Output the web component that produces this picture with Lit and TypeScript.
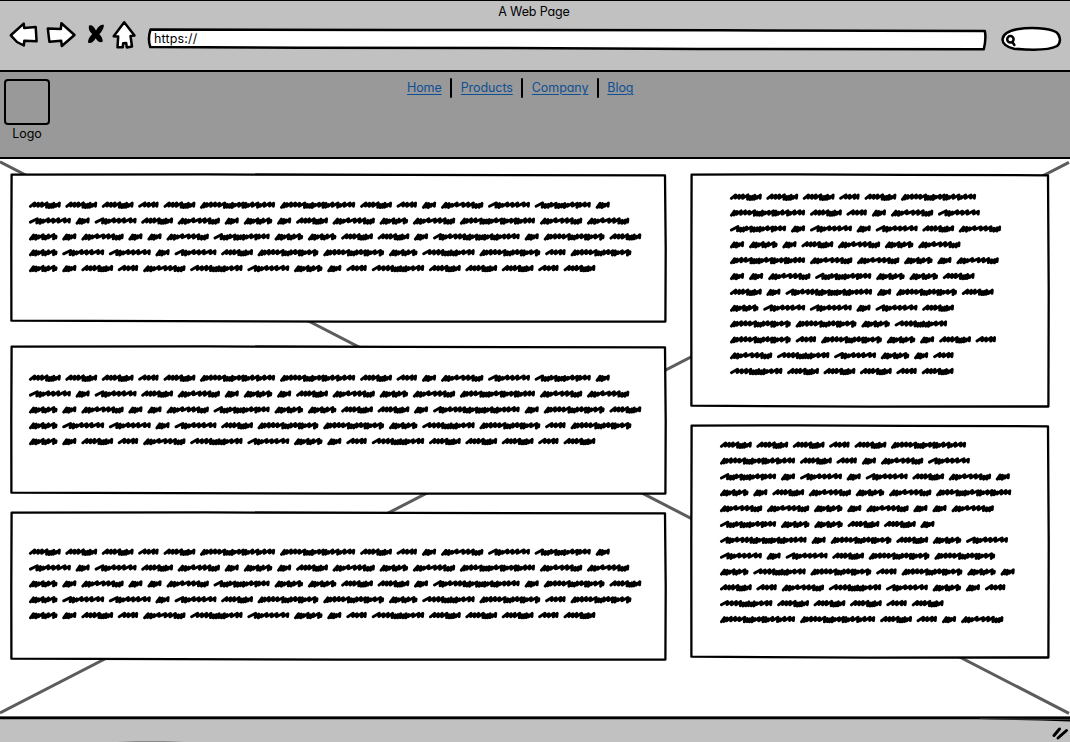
import { LitElement, html, svg, css } from "lit";
import { customElement, property } from "lit/decorators.js";

/* Scribbled words: total width, distance to the next word, and stroke profile.
   n = open stroke, u = dense low stroke, q = dense full-height stroke, f = long thin flourish */
const WORDS: Record<string, { w: number; adv: number; s: string }> = {
  A: { w: 32.4, adv: 36.4, s: "nnnfuuqun" },
  B: { w: 21, adv: 25.4, s: "fnfn" },
  C: { w: 75.7, adv: 80.1, s: "qqnnnfuuqunnqunfunfn" },
  D: { w: 42.5, adv: 46.6, s: "fqunnnfn" },
  E: { w: 14.7, adv: 19.1, s: "qqun" },
  F: { w: 42.9, adv: 47, s: "qqunfnnuuq" },
  G: { w: 29.1, adv: 33.3, s: "qqunuqfu" },
  H: { w: 56.7, adv: 61, s: "fuuqnuuqunnqnn" },
  I: { w: 53, adv: 57.2, s: "fnnnuuququnfn" },
  J: { w: 61.4, adv: 65.7, s: "qqnnnfuuqnnqunfu" },
  K: { w: 75.7, adv: 80.1, s: "qqnnfuuqunfqunnqunnn" },
  L: { w: 87.2, adv: 91.6, s: "fqunfnnuqunuuqunuqunnfn" },
};
const SHAPE: Record<string, [number, number, number]> = {
  n: [4.1, -2, 1.4],
  u: [2.5, -0.8, 2.5],
  q: [2.5, -1.7, 2.4],
  f: [5.2, -2.1, 1.3],
};

const LEFT = ["AAABACCABEFDHE", "DEDAFEGEAFGFKFF", "GEFEEFHGGAAELEJA", "GDDEDAJJGIJBJ", "GEABFIDGEBIAAABA"];
const RIGHT_TOP = ["AAABAC", "CABEFD", "HEDEDAF", "EGEAFGF", "KFFGEF", "EEFHGGA", "AELEJA", "GDDEDA", "JJGI", "JBJGEAB", "FIDGEB", "IAAABA"];
const RIGHT_BOTTOM = ["AAABAC", "CABEFD", "HEDEDAFE", "GEAFGFK", "FFGEFEEF", "HGGAAE", "LEJAGD", "DEDAJJ", "GIJBJGE", "ABFIDGEB", "IAAABA", "CCABEF"];

function wordPath(code: string, x0: number): string {
  const { w, s } = WORDS[code];
  const total = [...s].reduce((sum, c) => sum + SHAPE[c][0], 0);
  const k = (w - 3.4) / total;
  let x = x0 + 1.6;
  let d = "";
  [...s].forEach((c, i) => {
    const [step, top, bottom] = SHAPE[c];
    const jitter = i % 3 === 1 ? 0.3 : 0;
    d += `${i ? "L" : "M"}${x.toFixed(1)} ${(bottom - jitter).toFixed(1)}`;
    x += step * k;
    d += `L${(x + (i === s.length - 1 ? 0 : 0.5)).toFixed(1)} ${(top + jitter).toFixed(1)}`;
  });
  return d + `L${(x - 0.3).toFixed(1)} 1.2`;
}

@customElement("scribble-text")
class ScribbleText extends LitElement {
  @property({ attribute: false }) lines: string[] = [];
  static styles = css`
    :host { display: block; }
    svg { display: block; overflow: visible; }
    path { fill: none; stroke: #000; stroke-width: 2.9; stroke-linejoin: round; stroke-linecap: round; }
  `;
  render() {
    return html`<svg width="620" height=${this.lines.length * 15.85}>
      ${this.lines.map((line, row) => {
        let x = -0.2;
        const d = [...line].map((c) => {
          const p = wordPath(c, x);
          x += WORDS[c].adv;
          return p;
        });
        return svg`<path transform="translate(0 ${(row * 15.85 + 8).toFixed(2)})" d=${d.join("")}></path>`;
      })}
    </svg>`;
  }
}

@customElement("sketch-card")
class SketchCard extends LitElement {
  @property({ type: Number }) w = 0;
  @property({ type: Number }) h = 0;
  static styles = css`
    :host { display: block; position: relative; box-sizing: border-box; }
    .frame { position: absolute; inset: 0; display: block; }
    .frame path { fill: #fff; stroke: #000; stroke-width: 2.3; stroke-linejoin: round; }
    .body { position: relative; }
  `;
  render() {
    const { w, h } = this;
    return html`<svg class="frame" width=${w} height=${h} overflow="visible">
        <path d="M1.6 .6L${w * 0.3} .4L${w * 0.6} .9L${w - 1} 1.3L${w - 0.3} ${h / 2}L${w - 0.6} ${h - 0.5}L${w * 0.5} ${h - 0.4}L1.4 ${h - 1.3}L1.3 ${h / 2}Z"></path>
      </svg>
      <div class="body"><slot></slot></div>`;
  }
}

@customElement("app-root")
class AppRoot extends LitElement {
  static styles = css`
    :host {
      display: flex; flex-direction: column; width: 1070px; height: 742px; overflow: hidden;
      font-family: Inter, "Open Sans", sans-serif; font-feature-settings: "cv11"; font-size: 12.5px; line-height: 16px; color: #000;
    }
    * { box-sizing: border-box; }
    .chrome { height: 72px; background: #c1c1c1; border-top: 1px solid #000; border-bottom: 2px solid #000; display: flex; flex-direction: column; }
    .title { text-align: center; padding: 3px 2px 0 0; height: 19px; letter-spacing: -.12px; }
    .tools { display: flex; height: 36px; }
    .nav-icons { width: 147px; height: 36px; flex: none; }
    .tools svg { display: block; overflow: visible; }
    .ink { fill: #fff; stroke: #000; stroke-width: 2.5; stroke-linejoin: round; stroke-linecap: round; }
    .url { display: grid; width: 841px; height: 36px; }
    .url > * { grid-area: 1 / 1; }
    .url span { padding: 11px 0 0 7px; z-index: 1; letter-spacing: .15px; }
    .search { width: 82px; height: 36px; }
    .banner { height: 87px; background: #999; border-bottom: 2px solid #000; display: grid; grid-template-columns: 54px 1fr 84px; }
    .logo { padding: 7px 0 0 4px; }
    .mark { width: 46px; height: 46px; border: 2px solid #000; border-radius: 4px; }
    .caption { width: 46px; text-align: center; padding-top: 1px; }
    .menu { display: flex; padding: 6px 0 0 353px; height: 27px; }
    .menu a { color: #0f4f94; text-decoration: underline; text-decoration-thickness: 1px; text-underline-offset: 1.5px; padding: 2px 0 0; white-space: nowrap; letter-spacing: -.08px; }
    .menu i { width: 2px; height: 20px; background: #000; margin: 0 8.5px; flex: none; border-radius: 1px; }
    .page { height: 557px; display: grid; background: #fff; flex: none; }
    .page > * { grid-area: 1 / 1; }
    .cross { display: block; }
    .cross path { stroke: #5c5c5c; stroke-width: 3; fill: none; }
    .columns { display: grid; grid-template-columns: 656px 360px; column-gap: 24px; padding: 15px 0 0 10px; align-content: start; }
    .left, .right { display: flex; flex-direction: column; }
    .left { gap: 18px; }
    .left sketch-card { width: 656px; height: 148px; padding: 23px 0 0 19px; }
    .left .first { margin-bottom: 6px; }
    .left .second { padding-top: 24px; }
    .left .third { padding-top: 32px; }
    .right { gap: 18px; }
    .right sketch-card { width: 359px; height: 233px; padding: 15px 0 0 40px; }
    .right .lower { padding: 12px 0 0 30px; }
    .status { height: 26px; background: #c1c1c1; flex: none; }
    .status svg { display: block; }
  `;

  render() {
    return html`
      <header class="chrome">
        <div class="title">A Web Page</div>
        <div class="tools">
          <svg class="nav-icons" viewBox="0 20 147 36">
            <path class="ink" d="M10.8 35.3L23.7 23.6L24.2 28L35.7 27L36.6 41.3L24.3 40.8L23.8 45.5L17 42Z"></path>
            <path class="ink" d="M47.8 28.4L60.8 29L61.4 23.3L74.5 35L61.8 46L61.2 40.8L49.4 41.8Z"></path>
            <path d="M89 25.6Q92.5 23.6 96 30.5Q99.3 24 103.9 24.8Q104 29.5 99.3 34.2Q102.6 37 102.7 41.8Q98.7 43.5 95.7 38.2Q92.5 44 88.2 42.7Q87.2 39.5 92.2 34Q87.8 30.5 89 25.6Z"></path>
            <path class="ink" d="M124.2 22.2L134.5 35.6L130.5 36L132 46.5L126.8 47.4L126.2 43L123.2 43.2L122.7 47.3L117.5 47.2L118.2 36.5L113.7 36.3Z"></path>
          </svg>
          <div class="url">
            <svg width="841" height="36" viewBox="147 20 841 36">
              <path class="ink" d="M150.5 29.6L400 29.9L720 30.3L984.8 31Q986.4 38 983.8 49.2L700 49L500 48L300 47.8L150.3 47Q147.5 39 150.5 29.6Z"></path>
            </svg>
            <span>https://</span>
          </div>
          <svg class="search" viewBox="988 20 82 36">
            <path class="ink" d="M1017 29.2C1030 27.2 1048 27.7 1056 32C1060.5 35 1061.5 42.5 1057 46C1048 50.8 1026 49.8 1014 48.7C998.5 45.5 998 33 1017 29.2Z"></path>
            <circle class="ink" cx="1010.4" cy="39.3" r="3.2"></circle>
            <path class="ink" d="M1012.4 42.2L1014.4 45"></path>
          </svg>
        </div>
      </header>
      <div class="banner">
        <div class="logo"><div class="mark"></div><div class="caption">Logo</div></div>
        <nav class="menu"><a>Home</a><i></i><a>Products</a><i></i><a>Company</a><i></i><a>Blog</a></nav>
      </div>
      <main class="page">
        <svg class="cross" width="1070" height="557" viewBox="0 159 1070 557">
          <path d="M0 161.8L1069 713.4M1069 162.3L0 713"></path>
        </svg>
        <div class="columns">
          <div class="left">
            ${["first", "second", "third"].map((name) => html`<sketch-card class=${name} w="656" h="148"><scribble-text .lines=${LEFT}></scribble-text></sketch-card>`)}
          </div>
          <div class="right">
            <sketch-card w="359" h="233"><scribble-text .lines=${RIGHT_TOP}></scribble-text></sketch-card>
            <sketch-card class="lower" w="359" h="233"><scribble-text .lines=${RIGHT_BOTTOM}></scribble-text></sketch-card>
          </div>
        </div>
      </main>
      <footer class="status">
        <svg width="1070" height="26" viewBox="0 716 1070 26">
          <path d="M0 716.4H1070V721.4L1040 720.4L980 719.2H0Z"></path>
          <path d="M980 718.8L1070 719.6" stroke="#555" stroke-width=".8"></path>
          <path d="M117 742L137 741H165L185 742Z" fill="#888"></path>
          <path d="M1054 735.5L1059.5 729M1058 738L1066.5 730.5" stroke="#000" stroke-width="3" stroke-linecap="round"></path>
        </svg>
      </footer>`;
  }
}
